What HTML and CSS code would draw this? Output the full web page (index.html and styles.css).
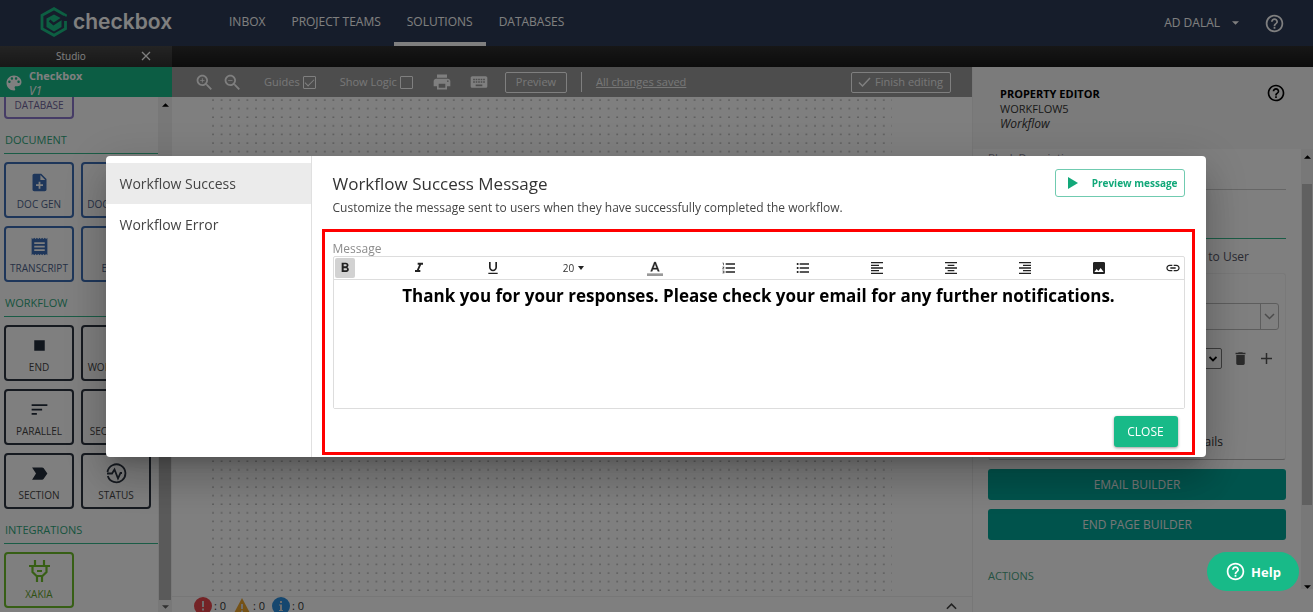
FILE: index.html
```html
<!DOCTYPE html>
<html lang="en">
<head>
<meta charset="utf-8">
<title>Checkbox Studio</title>
<link rel="stylesheet" href="styles.css">
</head>
<body>
<svg class="defs" width="0" height="0" aria-hidden="true">
  <symbol id="help" viewBox="0 0 24 24"><path d="M11 18h2v-2h-2v2zm1-16C6.480 2 2 6.480 2 12s4.480 10 10 10 10-4.480 10-10S17.520 2 12 2zm0 18c-4.410 0-8-3.590-8-8s3.590-8 8-8 8 3.590 8 8-3.590 8-8 8zm0-14c-2.210 0-4 1.790-4 4h2c0-1.100.9-2 2-2s2 .9 2 2c0 2-3 1.750-3 5h2c0-2.250 3-2.500 3-5 0-2.210-1.790-4-4-4z"/></symbol>
</svg>
<div class="app">
  <header class="nav">
    <a class="brand" href="#">
      <svg width="28" height="30" viewBox="0 0 28 30" fill="none"><path d="M25.500 9.500V8.300L14 1.700 2 8.300v13.400l12 6.600 11.500-6.600V14" stroke="#1abf85" stroke-width="2.800"/><path d="M14 7.500l7.500 4v8.500L14 24.500 6.500 20v-8.500z" fill="#1abf85"/><path d="M9.500 13.500l4 3.500L25 9.500" stroke="#2c3a56" stroke-width="2.400"/></svg>
      <span>checkbox</span>
    </a>
    <nav class="menu">
      <a href="#">INBOX</a><a href="#">PROJECT TEAMS</a><a class="active" href="#">SOLUTIONS</a><a href="#">DATABASES</a>
    </nav>
    <button class="user">AD DALAL <svg width="7" height="4" viewBox="0 0 8 4"><path d="M0 0h8L4 4z"/></svg></button>
    <button class="icon nav-help" aria-label="Help"><svg width="21" height="21"><use href="#help"/></svg></button>
  </header>
  <div class="tabs">
    <div class="tab"><span>Studio</span><button class="icon" aria-label="Close tab"><svg width="10" height="10" viewBox="0 0 10 10" stroke="#fff" stroke-width="1.300"><path d="M1 1l8 8M9 1l-8 8"/></svg></button></div>
  </div>
  <div class="workspace">
    <aside class="sidebar">
      <div class="project">
        <svg width="20" height="20" viewBox="0 0 24 24" fill="#fff"><path d="M12 3c-4.970 0-9 4.030-9 9s4.030 9 9 9c.83 0 1.500-.67 1.500-1.500 0-.39-.15-.74-.39-1.010-.23-.26-.38-.61-.38-.99 0-.83.67-1.500 1.500-1.500H16c2.760 0 5-2.240 5-5 0-4.420-4.030-8-9-8zm-5.500 9c-.83 0-1.500-.67-1.500-1.500S5.670 9 6.500 9 8 9.670 8 10.500 7.330 12 6.500 12zm3-4C8.670 8 8 7.330 8 6.500S8.670 5 9.500 5s1.500.67 1.500 1.500S10.330 8 9.500 8zm5 0c-.83 0-1.500-.67-1.500-1.500S13.670 5 14.500 5s1.500.67 1.500 1.500S15.330 8 14.500 8zm3 4c-.83 0-1.500-.67-1.500-1.500S16.670 9 17.500 9s1.500.67 1.500 1.500-.67 1.500-1.500 1.500z"/></svg>
        <div><strong>Checkbox</strong><em>V1</em></div>
      </div>
      <div class="palette">
        <div class="blocks">
          <div class="tiles purple"><button class="tile"><svg width="20" height="20"></svg>DATABASE</button></div>
          <h2>DOCUMENT</h2>
          <div class="tiles blue">
            <button class="tile"><svg width="21" height="21" viewBox="0 0 24 24"><path d="M14 2H6c-1.100 0-2 .9-2 2v16c0 1.100.9 2 2 2h12c1.100 0 2-.9 2-2V8l-6-6zm2 14h-3v3h-2v-3H8v-2h3v-3h2v3h3v2zM13 9V3.500L18.500 9H13z"/></svg>DOC GEN</button>
            <button class="tile"><svg width="21" height="21"></svg>DOC MERGE</button>
            <button class="tile"><svg width="21" height="21" viewBox="0 0 24 24"><path d="M18 17H6v-2h12v2zm0-4H6v-2h12v2zm0-4H6V7h12v2zM3 22l1.500-1.500L6 22l1.500-1.500L9 22l1.500-1.500L12 22l1.500-1.500L15 22l1.500-1.500L18 22l1.500-1.500L21 22V2l-1.500 1.500L18 2l-1.500 1.500L15 2l-1.500 1.500L12 2l-1.500 1.500L9 2 7.500 3.500 6 2 4.500 3.500 3 2v20z"/></svg>TRANSCRIPT</button>
            <button class="tile"><svg width="21" height="21"></svg>EMAIL</button>
          </div>
          <h2>WORKFLOW</h2>
          <div class="tiles dark">
            <button class="tile"><svg width="21" height="21" viewBox="0 0 24 24"><path d="M6 6h12v12H6z"/></svg>END</button>
            <button class="tile"><svg width="21" height="21"></svg>WORKFLOW</button>
            <button class="tile"><svg width="21" height="21" viewBox="0 0 24 24"><path d="M3 18h6v-2H3v2zM3 6v2h18V6H3zm0 7h12v-2H3v2z"/></svg>PARALLEL</button>
            <button class="tile"><svg width="21" height="21"></svg>SECTIONAL</button>
            <button class="tile"><svg width="21" height="21" viewBox="0 0 24 24"><path d="M3.500 19l4.500-7-4.500-7H15c.65 0 1.260.31 1.630.84L21 12l-4.370 6.160c-.37.52-.98.84-1.630.84z"/></svg>SECTION</button>
            <button class="tile"><svg width="21" height="21" viewBox="0 0 21 21"><path d="M1.500 9a9 9 0 1 1 .3 4M1 10.500h5l2.500-4 3.500 9 2.500-5.500h1.500" fill="none" stroke="#2c3440" stroke-width="1.800"/></svg>STATUS</button>
          </div>
          <h2>INTEGRATIONS</h2>
          <div class="tiles green">
            <button class="tile"><svg width="21" height="23" viewBox="0 0 21 23" fill="none" stroke="#6fbf2a" stroke-width="2.200"><path d="M6 0v6M15 0v6M0 6h21M3.500 6v6l4 4h6l4-4V6M8 16v6M13 16v6M8 11h5"/></svg>XAKIA</button>
          </div>
        </div>
        <div class="scroll"><svg width="7" height="4" viewBox="0 0 8 4"><path d="M0 4h8L4 0z"/></svg><i class="thumb"></i><svg width="7" height="4" viewBox="0 0 8 4" opacity=".6"><path d="M0 0h8L4 4z"/></svg></div>
      </div>
    </aside>
    <main class="stage">
      <div class="toolbar">
        <button class="icon" aria-label="Zoom in"><svg width="21" height="21" viewBox="0 0 24 24"><path d="M15.500 14h-.79l-.28-.27C15.410 12.590 16 11.110 16 9.500 16 5.910 13.090 3 9.500 3S3 5.910 3 9.500 5.910 16 9.500 16c1.610 0 3.090-.59 4.230-1.570l.27.28v.79l5 4.990L20.490 19l-4.990-5zm-6 0C7.010 14 5 11.990 5 9.500S7.010 5 9.500 5 14 7.010 14 9.500 11.990 14 9.500 14zm2.500-4h-2v2H9v-2H7V9h2V7h1v2h2v1z"/></svg></button>
        <button class="icon" aria-label="Zoom out"><svg width="21" height="21" viewBox="0 0 24 24"><path d="M15.500 14h-.79l-.28-.27C15.410 12.590 16 11.110 16 9.500 16 5.910 13.090 3 9.500 3S3 5.910 3 9.500 5.910 16 9.500 16c1.610 0 3.090-.59 4.230-1.570l.27.28v.79l5 4.990L20.490 19l-4.990-5zm-6 0C7.010 14 5 11.990 5 9.500S7.010 5 9.500 5 14 7.010 14 9.500 11.990 14 9.500 14zM7 9h5v1H7z"/></svg></button>
        <label class="guides">Guides <input type="checkbox" checked></label>
        <label class="logic">Show Logic <input type="checkbox"></label>
        <button class="icon print" aria-label="Print"><svg width="20" height="20" viewBox="0 0 24 24"><path d="M19 8H5c-1.660 0-3 1.340-3 3v6h4v4h12v-4h4v-6c0-1.660-1.340-3-3-3zm-3 11H8v-5h8v5zm3-7c-.55 0-1-.45-1-1s.45-1 1-1 1 .45 1 1-.45 1-1 1zm-1-9H6v4h12V3z"/></svg></button>
        <button class="icon keys" aria-label="Keyboard shortcuts"><svg width="20" height="20" viewBox="0 0 24 24"><path d="M20 5H4c-1.100 0-1.990.9-1.990 2L2 17c0 1.100.9 2 2 2h16c1.100 0 2-.9 2-2V7c0-1.100-.9-2-2-2zm-9 3h2v2h-2V8zm0 3h2v2h-2v-2zM8 8h2v2H8V8zm0 3h2v2H8v-2zm-1 2H5v-2h2v2zm0-3H5V8h2v2zm9 7H8v-2h8v2zm0-4h-2v-2h2v2zm0-3h-2V8h2v2zm3 3h-2v-2h2v2zm0-3h-2V8h2v2z"/></svg></button>
        <button class="outline">Preview</button>
        <span class="rule"></span>
        <a class="saved" href="#">All changes saved</a>
        <button class="outline finish"><svg width="13" height="10" viewBox="0 0 13 10" fill="none" stroke="#fff" stroke-width="1.500"><path d="M1 5.500L4.500 9 12 1"/></svg>Finish editing</button>
      </div>
      <div class="canvas"><svg class="dots" width="100%" height="100%"><defs><pattern id="grid" width="8.600" height="8.600" patternUnits="userSpaceOnUse"><circle cx="1" cy="3" r=".8" fill="#aaa"/></pattern></defs><rect width="100%" height="100%" fill="url(#grid)"/></svg></div>
      <footer class="status">
        <span><svg width="18" height="18" viewBox="0 0 18 18"><circle cx="9" cy="9" r="9" fill="#e8474d"/><path d="M8 4h2v6H8zM8 11.500h2v2H8z" fill="#ddd"/></svg>: 0</span>
        <span><svg width="18" height="18" viewBox="0 0 18 18"><path d="M9 1l9 17H0z" fill="#eaa42d"/><path d="M8 7h2v5H8zM8 13.500h2v2H8z" fill="#ddd"/></svg>: 0</span>
        <span><svg width="18" height="18" viewBox="0 0 18 18"><circle cx="9" cy="9" r="9" fill="#2a8ede"/><path d="M8 4h2v2H8zM7 7.500h3V13h1v1H7v-1h1V8.500H7z" fill="#ddd"/></svg>: 0</span>
        <button class="icon expand" aria-label="Expand"><svg width="11" height="8" viewBox="0 0 12 8" fill="none" stroke="#444" stroke-width="1.800"><path d="M1 7l5-5 5 5"/></svg></button>
      </footer>
    </main>
    <aside class="props">
      <div class="props-head">
        <div><h1>PROPERTY EDITOR</h1><p>WORKFLOW5</p><em>Workflow</em></div>
        <button class="icon" aria-label="Property help"><svg width="20" height="20"><use href="#help"/></svg></button>
      </div>
      <div class="props-scroll">
        <div class="form">
          <label class="desc">Block Description<input type="text"></label>
          <div class="divider"></div>
          <p class="to-user">Message to User</p>
          <div class="card">
            <div class="combo"><svg width="11" height="7" viewBox="0 0 11 7" fill="none" stroke="#999" stroke-width="1.500"><path d="M1 1l4.500 4.500L10 1"/></svg></div>
            <div class="row">
              <button class="mini" aria-label="Choose"><svg width="8" height="6" viewBox="0 0 8 6" fill="none" stroke="#000" stroke-width="1.800"><path d="M.5 1L4 4.500 7.500 1"/></svg></button>
              <button class="icon" aria-label="Delete"><svg width="17" height="17" viewBox="0 0 24 24" fill="#555"><path d="M6 19c0 1.100.9 2 2 2h8c1.100 0 2-.9 2-2V7H6v12zM19 4h-3.500l-1-1h-5l-1 1H5v2h14V4z"/></svg></button>
              <button class="icon" aria-label="Add"><svg width="11" height="11" viewBox="0 0 11 11" stroke="#555" stroke-width="1.500"><path d="M5.500 0v11M0 5.500h11"/></svg></button>
            </div>
            <p class="emails">Emails</p>
          </div>
          <button class="build">EMAIL BUILDER</button>
          <button class="build">END PAGE BUILDER</button>
          <h3>ACTIONS</h3>
        </div>
        <div class="scroll"><svg width="7" height="4" viewBox="0 0 8 4"><path d="M0 4h8L4 0z"/></svg><i class="thumb"></i><svg width="7" height="4" viewBox="0 0 8 4"><path d="M0 0h8L4 4z"/></svg></div>
      </div>
    </aside>
  </div>
</div>

<div class="backdrop">
  <section class="modal" role="dialog" aria-labelledby="modal-title">
    <div class="modal-tabs"><button class="selected">Workflow Success</button><button>Workflow Error</button></div>
    <div class="modal-main">
      <div class="modal-head">
        <div><h2 id="modal-title">Workflow Success Message</h2><p>Customize the message sent to users when they have successfully completed the workflow.</p></div>
        <button class="preview"><svg width="10" height="12" viewBox="0 0 10 12"><path d="M0 0v12l10-6z"/></svg>Preview message</button>
      </div>
      <div class="highlight">
        <label class="caption" for="message">Message</label>
        <div class="editor">
          <div class="format">
            <button class="on" aria-label="Bold"><svg width="16" height="16" viewBox="0 0 24 24"><path d="M15.600 10.790c.97-.67 1.650-1.770 1.650-2.790 0-2.260-1.750-4-4-4H7v14h7.040c2.090 0 3.710-1.700 3.710-3.790 0-1.520-.86-2.820-2.150-3.420zM10 6.500h3c.83 0 1.500.67 1.500 1.500s-.67 1.500-1.500 1.500h-3v-3zm3.500 9H10v-3h3.500c.83 0 1.500.67 1.500 1.500s-.67 1.500-1.500 1.500z"/></svg></button>
            <button aria-label="Italic"><svg width="16" height="16" viewBox="0 0 24 24"><path d="M10 4v3h2.210l-3.420 8H6v3h8v-3h-2.210l3.420-8H18V4z"/></svg></button>
            <button aria-label="Underline"><svg width="16" height="16" viewBox="0 0 24 24"><path d="M12 17c3.310 0 6-2.690 6-6V3h-2.500v8c0 1.930-1.570 3.500-3.500 3.500S8.500 12.930 8.500 11V3H6v8c0 3.310 2.690 6 6 6zm-7 2v2h14v-2H5z"/></svg></button>
            <button class="size">20 <svg width="6" height="4" viewBox="0 0 6 4"><path d="M0 0h6L3 4z"/></svg></button>
            <button aria-label="Text colour"><svg width="16" height="16" viewBox="0 0 24 24"><path d="M0 20h24v4H0z" fill="#999"/><path d="M11 3L5.500 17h2.250l1.120-3h6.250l1.120 3h2.250L13 3h-2zm-1.380 9L12 5.670 14.380 12H9.620z" stroke="#222" stroke-width=".6"/></svg></button>
            <button aria-label="Numbered list"><svg width="16" height="16" viewBox="0 0 24 24"><path d="M2 17h2v.5H3v1h1v.5H2v1h3v-4H2v1zm1-9h1V4H2v1h1v3zm-1 3h1.800L2 13.100v.9h3v-1H3.200L5 10.900V10H2v1zm5-6v2h14V5H7zm0 14h14v-2H7v2zm0-6h14v-2H7v2z"/></svg></button>
            <button aria-label="Bulleted list"><svg width="16" height="16" viewBox="0 0 24 24"><path d="M4 10.500c-.83 0-1.500.67-1.500 1.500s.67 1.500 1.500 1.500 1.500-.67 1.500-1.500-.67-1.500-1.500-1.500zm0-6c-.83 0-1.500.67-1.500 1.500S3.170 7.500 4 7.500 5.500 6.830 5.500 6 4.830 4.500 4 4.500zm0 12c-.83 0-1.500.68-1.500 1.500s.68 1.500 1.500 1.500 1.500-.68 1.500-1.500-.67-1.500-1.500-1.500zM7 19h14v-2H7v2zm0-6h14v-2H7v2zm0-8v2h14V5H7z"/></svg></button>
            <button aria-label="Align left"><svg width="16" height="16" viewBox="0 0 24 24"><path d="M15 15H3v2h12v-2zm0-8H3v2h12V7zM3 13h18v-2H3v2zm0 8h18v-2H3v2zM3 3v2h18V3H3z"/></svg></button>
            <button aria-label="Align centre"><svg width="16" height="16" viewBox="0 0 24 24"><path d="M7 15v2h10v-2H7zm-4 6h18v-2H3v2zm0-8h18v-2H3v2zm4-6v2h10V7H7zM3 3v2h18V3H3z"/></svg></button>
            <button aria-label="Align right"><svg width="16" height="16" viewBox="0 0 24 24"><path d="M3 21h18v-2H3v2zm6-4h12v-2H9v2zm-6-4h18v-2H3v2zm6-4h12V7H9v2zM3 3v2h18V3H3z"/></svg></button>
            <button aria-label="Insert image"><svg width="16" height="16" viewBox="0 0 24 24"><path d="M21 19V5c0-1.100-.9-2-2-2H5c-1.100 0-2 .9-2 2v14c0 1.100.9 2 2 2h14c1.100 0 2-.9 2-2zM8.500 13.500l2.500 3.010L14.500 12l4.500 6H5l3.500-4.500z"/></svg></button>
            <button aria-label="Insert link"><svg width="16" height="16" viewBox="0 0 24 24"><path d="M3.900 12c0-1.710 1.390-3.100 3.100-3.100h4V7H7c-2.760 0-5 2.240-5 5s2.240 5 5 5h4v-1.900H7c-1.710 0-3.100-1.390-3.100-3.100zM8 13h8v-2H8v2zm9-6h-4v1.900h4c1.710 0 3.100 1.390 3.100 3.100s-1.390 3.100-3.100 3.100h-4V17h4c2.760 0 5-2.240 5-5s-2.240-5-5-5z"/></svg></button>
          </div>
          <textarea id="message" rows="5">Thank you for your responses. Please check your email for any further notifications.</textarea>
        </div>
        <button class="close">CLOSE</button>
      </div>
    </div>
  </section>
</div>
<button class="help-chat"><svg width="21" height="21" fill="#fff"><use href="#help"/></svg>Help</button>
</body>
</html>
```
FILE: styles.css
```css
* { box-sizing: border-box; }
body { margin: 0; font-family: "Open Sans", "Noto Sans", sans-serif; font-size: 12px; line-height: 16px; color: #333; overflow: hidden; }
h1, h2, h3, p { margin: 0; font-weight: 400; }
h1, h2, h3 { font-size: 11px; }
button { font: inherit; color: inherit; background: none; border: 0; padding: 0; cursor: pointer; }
a { color: inherit; text-decoration: none; }
svg { display: block; flex: none; }
.defs { position: absolute; }
.icon { display: flex; align-items: center; justify-content: center; }

.app { display: flex; flex-direction: column; height: 100vh; }
.nav { display: flex; align-items: center; flex: none; height: 46px; padding: 0 28px 0 40px; background: #2c3a56; color: #fff; fill: #fff; }
.brand { display: flex; align-items: center; gap: 5px; width: 176px; height: 46px; padding-bottom: 3px; font: 600 21px/28px Inter, sans-serif; }
.menu { display: flex; flex: 1; height: 46px; }
.menu a { padding: 14px 13px 12px; border-bottom: 4px solid transparent; }
.menu .active { border-color: #fff; }
.user { display: flex; align-items: center; gap: 12px; margin-right: 25px; }

.tabs { flex: none; height: 21px; background: linear-gradient(#2e2e2e, #181818); }
.tab { display: flex; align-items: center; justify-content: space-between; width: 172px; height: 21px; padding: 0 21px 1px 56px; background: linear-gradient(#484848, #303030); color: #fff; font-size: 10px; }

.workspace { display: grid; grid-template-columns: 172px 1fr 341px; flex: 1; min-height: 0; }
.sidebar { display: flex; flex-direction: column; min-height: 0; }
.project { display: flex; align-items: center; gap: 5px; flex: none; height: 30px; padding: 2px 0 0 4px; background: #18ba88; color: #fff; line-height: 15px; }
.project strong, .project em { display: block; }
.project strong { font-size: 11px; }
.palette { display: flex; flex: 1; min-height: 0; }
.blocks { display: flex; flex-direction: column; justify-content: flex-end; flex: 1; overflow: hidden; padding: 0 0 4px 4px; background: #fff; }
.blocks h2 { flex: none; height: 35px; margin-bottom: 8px; padding: 13px 0 0 1px; border-bottom: 1px solid #35b98c; color: #2fa77c; }
.tiles { display: flex; flex-wrap: wrap; flex: none; gap: 8px 7px; }
.tile { display: flex; flex-direction: column; align-items: center; justify-content: flex-end; gap: 4px; width: 70px; height: 56px; padding-bottom: 4px; border: 2px solid; border-radius: 4px; font-size: 10px; line-height: 15px; white-space: nowrap; overflow: hidden; }
.purple .tile { border-color: #8c78cd; color: #6f649b; }
.blue .tile { border-color: #3c6db4; color: #4d638c; fill: #3c6db4; }
.dark .tile { border-color: #2c3440; color: #444; fill: #222d3b; }
.green .tile { border-color: #6fbf2a; color: #60a22a; }
.scroll { display: flex; flex-direction: column; align-items: center; gap: 5px; flex: none; width: 14px; padding: 6px 1px 0; background: #f1f1f1; }
.thumb { flex: 1; width: 100%; }
.palette .scroll { padding-bottom: 3px; }
.palette .thumb { margin-top: 80px; background: #b4b4b4; }

.stage { display: flex; flex-direction: column; min-width: 0; background: #fff; }
.toolbar { display: flex; align-items: center; flex: none; height: 30px; padding: 0 21px 0 22px; background: #9a9a9a; color: #eee; fill: #fff; font-size: 11px; }
.toolbar .icon + .icon { margin-left: 7px; }
.toolbar label { display: flex; align-items: center; gap: 3px; }
.toolbar input { appearance: none; width: 13px; height: 13px; margin: 0; border: 1px solid #fff; border-radius: 1px; }
.toolbar input:checked::after { content: ""; display: block; width: 8px; height: 4px; margin: 2px 1px; border: solid #fff; border-width: 0 0 1px 1px; transform: rotate(-45deg); }
.guides { margin-left: 21px; }
.logic { margin: 0 19px 0 24px; }
.toolbar .print + .keys { margin-left: 17px; }
.outline { display: flex; align-items: center; gap: 4px; height: 21px; padding: 0 10px; border: 1px solid #fff; border-radius: 2px; }
.keys + .outline { margin-left: 16px; }
.rule { width: 1px; height: 20px; margin: 0 14px; background: #fff; }
.saved { text-decoration: underline; }
.finish { margin-left: auto; padding: 0 7px 0 6px; }
.canvas { flex: 1; min-height: 0; padding: 0 80px 5px 40px; }
.status { display: flex; align-items: center; gap: 7px; flex: none; height: 16px; padding: 2px 15px 0 22px; border-top: 1px solid #eee; overflow: hidden; white-space: nowrap; font-size: 11px; }
.status span { display: flex; align-items: center; gap: 2px; }
.expand { margin-left: auto; }

.props { display: flex; flex-direction: column; min-height: 0; border-left: 1px solid #eee; background: #fff; }
.props-head { display: flex; justify-content: space-between; align-items: flex-start; flex: none; height: 82px; padding: 16px 27px 0; background: #f6f6f6; }
.props-head > div { padding-top: 3px; line-height: 15px; }
.props-head h1 { color: #000; font-weight: 700; }
.props-head p { font-size: 11px; }
.props-scroll { display: flex; flex: 1; min-height: 0; }
.form { flex: 1; padding: 1px 15px 0; overflow: hidden; }
.props .scroll { width: 12px; margin-bottom: 23px; }
.props .thumb { margin: 20px 0 75px; background: #c0c0c0; }
.desc { display: block; color: #8a8798; font-size: 11px; }
.desc input { display: block; width: 100%; height: 24px; border: 0; border-bottom: 1px solid #ccc; background: none; }
.divider { height: 49px; border-bottom: 1px solid #35b98c; }
.to-user { padding: 10px 37px 8px; text-align: right; color: #555566; }
.card { height: 187px; padding: 29px 6px 0; border: 1px solid #f2f2f2; border-bottom: 1px solid #bbb; border-radius: 3px; }
.combo { display: flex; align-items: center; justify-content: flex-end; height: 27px; padding-right: 3px; border: 1px solid #bbb; border-radius: 3px; background: linear-gradient(to left, #fff 17px, #bbb 17px, #bbb 18px, #fff 18px); }
.row { display: flex; align-items: center; justify-content: flex-end; gap: 10px; margin-top: 18px; padding-right: 7px; }
.row .icon:last-child { margin-left: 2px; }
.mini { display: flex; align-items: center; justify-content: flex-end; width: 60px; height: 21px; padding-right: 4px; border: 1px solid #777; border-radius: 2px; }
.emails { padding: 65px 56px 0 0; text-align: right; }
.build { display: block; width: 100%; height: 31px; margin-top: 9px; border-radius: 3px; background: #00a698; color: #eee; }
.form h3 { margin: 28px 0 0; color: #4aa584; }

.backdrop { position: fixed; inset: 0; display: flex; align-items: center; justify-content: center; padding: 17px 18px 16px 16px; background: rgba(0, 0, 0, .5); }
.modal { display: flex; width: 100%; max-width: 1100px; border-radius: 4px; overflow: hidden; background: #fff; box-shadow: 0 11px 15px -7px rgba(0, 0, 0, .2), 0 24px 38px 3px rgba(0, 0, 0, .14), 0 9px 46px 8px rgba(0, 0, 0, .12); }
.modal-tabs { flex: none; width: 206px; padding-top: 7px; border-right: 1px solid #e0e0e0; }
.modal-tabs button { display: block; width: 100%; height: 41px; padding: 0 14px; text-align: left; font-size: 14px; color: #444; }
.modal-tabs .selected { background: #ebebeb; }
.modal-main { flex: 1; min-width: 0; padding: 13px 11px 2px 10px; }
.modal-head { display: flex; justify-content: space-between; align-items: flex-start; padding: 0 10px 0 11px; }
.modal-head h2 { margin-top: 3px; font-size: 17px; line-height: 24px; color: #333; }
.modal-head p { margin: 4px 0 13px; color: #444; }
.preview { display: flex; align-items: center; gap: 14px; height: 28px; padding: 0 6px 0 12px; border: 1px solid #70cbb0; border-radius: 3px; color: #12a879; fill: #12a879; font-size: 10px; font-weight: 700; }
.highlight { display: flex; flex-direction: column; padding: 10px 7px 5px 8px; border: 3px solid #f00; }
.caption { color: #8c8c8c; line-height: 14px; }
.editor { border: 1px solid #ddd; border-radius: 2px; }
.format { display: flex; align-items: center; justify-content: space-between; height: 23px; padding: 0 1px; border-bottom: 1px solid #ddd; fill: #222; }
.format button { display: flex; align-items: center; justify-content: center; width: 20px; height: 20px; border-radius: 2px; }
.format .on { background: #d2d2d2; }
.format .size { width: 34px; gap: 4px; font-size: 10px; }
textarea { display: block; width: 100%; height: 128px; padding: 4px; border: 0; outline: 0; resize: none; font: 700 17px/24px "Open Sans", "Noto Sans", sans-serif; color: #000; text-align: center; }
.close { align-self: flex-end; width: 64px; height: 31px; margin: 7px 7px 0; border-radius: 3px; background: #18ba88; color: #fff; box-shadow: 0 1px 3px rgba(0, 0, 0, .4); }
.help-chat { position: fixed; right: 14px; bottom: 21px; display: flex; align-items: center; justify-content: center; gap: 5px; width: 92px; height: 39px; border-radius: 20px; background: #18ba88; color: #fff; font-size: 13px; font-weight: 700; }
```
